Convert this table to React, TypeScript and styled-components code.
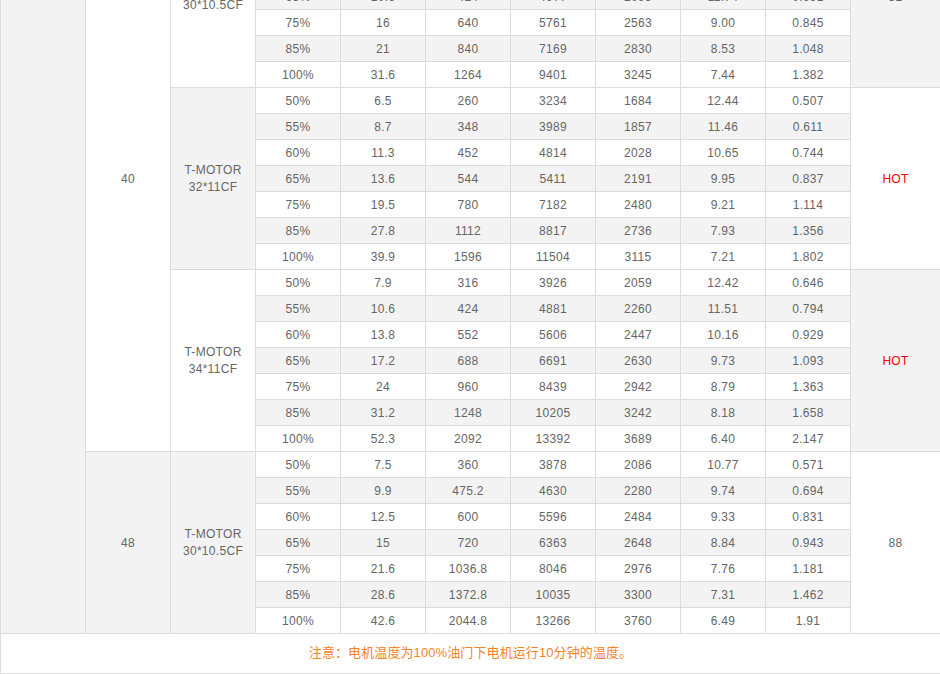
import React from "react";
import styled, { createGlobalStyle } from "styled-components";

const Global = createGlobalStyle`
  html, body { margin: 0; padding: 0; background: #fff; }
  body { font-family: "Liberation Sans", Arial, sans-serif; }
`;

const Viewport = styled.div`
  width: 940px;
  height: 674px;
  overflow: hidden;
`;

const DataTable = styled.table`
  width: 940px;
  margin-top: -95px;
  border-collapse: collapse;
  table-layout: fixed;
  font-family: "Liberation Sans", Arial, "Noto Sans CJK SC", sans-serif;
  font-size: 12px;
  letter-spacing: 0.3px;
  color: #666;
`;

const Row = styled.tr`
  height: 26px;
`;

const Cell = styled.td<{ $shade?: boolean; $hot?: boolean }>`
  border: 1px solid #dcdcdc;
  padding: 1px 0 0;
  height: 24px;
  text-align: center;
  vertical-align: middle;
  line-height: 17px;
  background: ${(p) => (p.$shade ? "#f3f3f3" : "#fff")};
  color: ${(p) => (p.$hot ? "#ff0000" : "#666")};
`;

const NoteCell = styled.td`
  border: 1px solid #dcdcdc;
  height: 35px;
  padding: 0 0 4px;
  text-align: center;
  vertical-align: middle;
  background: #fff;
  color: #f7822c;
  font-size: 13px;
  letter-spacing: 0.1px;
  font-family: "Liberation Sans", Arial, "Noto Sans CJK SC", sans-serif;
`;

type Group = {
  prop: string;
  temp: string;
  hot?: boolean;
  propShade: boolean;
  tempShade: boolean;
  rows: string[][];
};

const throttles = ["50%", "55%", "60%", "65%", "75%", "85%", "100%"];

const groups40: Group[] = [
  {
    prop: "30*10.5CF",
    temp: "82",
    propShade: false,
    tempShade: true,
    rows: [
      ["5.4", "216", "2981", "1600", "13.80", "0.412"],
      ["7.1", "284", "3612", "1771", "12.72", "0.500"],
      ["9.0", "360", "4320", "1935", "12.00", "0.598"],
      ["10.6", "424", "4977", "2098", "11.74", "0.691"],
      ["16", "640", "5761", "2563", "9.00", "0.845"],
      ["21", "840", "7169", "2830", "8.53", "1.048"],
      ["31.6", "1264", "9401", "3245", "7.44", "1.382"],
    ],
  },
  {
    prop: "32*11CF",
    temp: "HOT",
    hot: true,
    propShade: true,
    tempShade: false,
    rows: [
      ["6.5", "260", "3234", "1684", "12.44", "0.507"],
      ["8.7", "348", "3989", "1857", "11.46", "0.611"],
      ["11.3", "452", "4814", "2028", "10.65", "0.744"],
      ["13.6", "544", "5411", "2191", "9.95", "0.837"],
      ["19.5", "780", "7182", "2480", "9.21", "1.114"],
      ["27.8", "1112", "8817", "2736", "7.93", "1.356"],
      ["39.9", "1596", "11504", "3115", "7.21", "1.802"],
    ],
  },
  {
    prop: "34*11CF",
    temp: "HOT",
    hot: true,
    propShade: false,
    tempShade: true,
    rows: [
      ["7.9", "316", "3926", "2059", "12.42", "0.646"],
      ["10.6", "424", "4881", "2260", "11.51", "0.794"],
      ["13.8", "552", "5606", "2447", "10.16", "0.929"],
      ["17.2", "688", "6691", "2630", "9.73", "1.093"],
      ["24", "960", "8439", "2942", "8.79", "1.363"],
      ["31.2", "1248", "10205", "3242", "8.18", "1.658"],
      ["52.3", "2092", "13392", "3689", "6.40", "2.147"],
    ],
  },
];

const groups48: Group[] = [
  {
    prop: "30*10.5CF",
    temp: "88",
    propShade: true,
    tempShade: false,
    rows: [
      ["7.5", "360", "3878", "2086", "10.77", "0.571"],
      ["9.9", "475.2", "4630", "2280", "9.74", "0.694"],
      ["12.5", "600", "5596", "2484", "9.33", "0.831"],
      ["15", "720", "6363", "2648", "8.84", "0.943"],
      ["21.6", "1036.8", "8046", "2976", "7.76", "1.181"],
      ["28.6", "1372.8", "10035", "3300", "7.31", "1.462"],
      ["42.6", "2044.8", "13266", "3760", "6.49", "1.91"],
    ],
  },
];

const voltages: { v: string; shade: boolean; groups: Group[] }[] = [
  { v: "40", shade: false, groups: groups40 },
  { v: "48", shade: true, groups: groups48 },
];

const totalRows = voltages.reduce((n, v) => n + v.groups.length * 7, 0);

export default function App() {
  const rows: React.ReactNode[] = [];
  voltages.forEach((volt, vi) => {
    volt.groups.forEach((g, gi) => {
      g.rows.forEach((r, ri) => {
        const shade = ri % 2 === 1;
        rows.push(
          <Row key={`${vi}-${gi}-${ri}`}>
            {vi === 0 && gi === 0 && ri === 0 && <Cell $shade rowSpan={totalRows} />}
            {gi === 0 && ri === 0 && (
              <Cell $shade={volt.shade} rowSpan={volt.groups.length * 7}>
                {volt.v}
              </Cell>
            )}
            {ri === 0 && (
              <Cell $shade={g.propShade} rowSpan={7}>
                T-MOTOR
                <br />
                {g.prop}
              </Cell>
            )}
            <Cell $shade={shade}>{throttles[ri]}</Cell>
            {r.map((val, ci) => (
              <Cell key={ci} $shade={shade}>
                {val}
              </Cell>
            ))}
            {ri === 0 && (
              <Cell $shade={g.tempShade} $hot={g.hot} rowSpan={7}>
                {g.temp}
              </Cell>
            )}
          </Row>
        );
      });
    });
  });

  return (
    <>
      <Global />
      <Viewport>
        <DataTable>
          <colgroup>
            {Array.from({ length: 10 }).map((_, i) => (
              <col key={i} style={{ width: 85 }} />
            ))}
            <col style={{ width: 90 }} />
          </colgroup>
          <tbody>
            {rows}
            <tr>
              <NoteCell colSpan={11}>注意：电机温度为100%油门下电机运行10分钟的温度。</NoteCell>
            </tr>
          </tbody>
        </DataTable>
      </Viewport>
    </>
  );
}
